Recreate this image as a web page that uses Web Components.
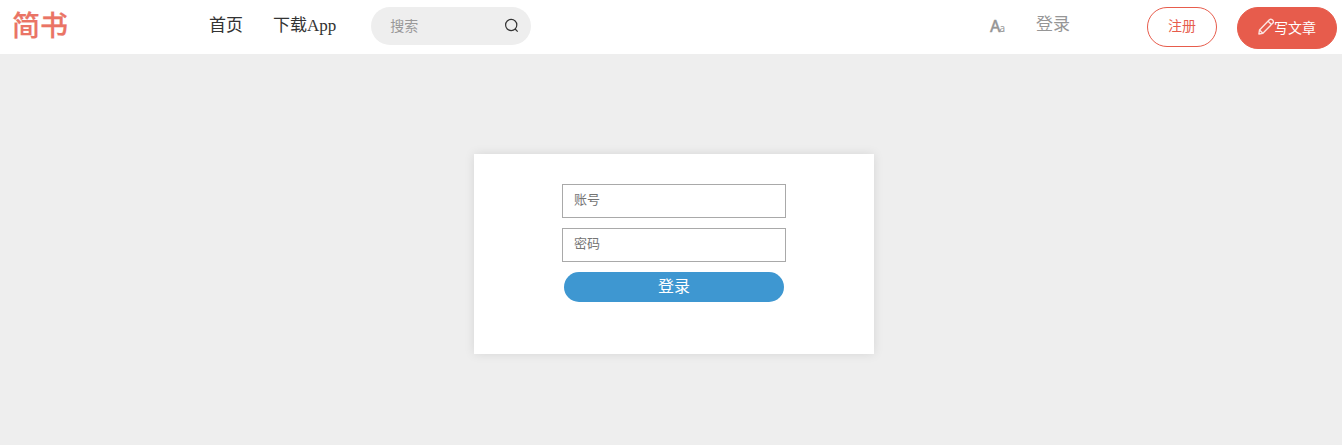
<!DOCTYPE html>
<html lang="zh-CN">
<head>
<meta charset="utf-8">
<title>简书</title>
<style>
html,body{height:100%}
body{margin:0;background:#eee;overflow:hidden;font-family:"Liberation Serif","Noto Sans CJK SC",serif;font-weight:400}
</style>
</head>
<body>
<js-page></js-page>
<script>
function define(name, html){
  const t=document.createElement('template');
  t.innerHTML=html;
  customElements.define(name,class extends HTMLElement{
    constructor(){
      super();
      this.attachShadow({mode:'open'}).appendChild(t.content.cloneNode(true));
    }
  });
}
define('js-logo',`<style>
:host{display:block;width:56px;height:54px;font:500 28px/49px "Noto Sans CJK SC",sans-serif;color:#ea7465;-webkit-text-stroke:.25px #ea7465;white-space:nowrap}
</style><slot></slot>`);
define('js-link',`<style>
:host{display:block;font-size:17px;line-height:20px;height:20px;color:#333;white-space:nowrap}
</style><slot></slot>`);
define('js-search',`<style>
:host{display:flex;box-sizing:border-box;width:160px;height:38px;border-radius:19px;background:#eee;padding:0 12px 0 19px;align-items:center;justify-content:space-between;font-size:14px;line-height:20px;color:#999}
span{margin-top:2px}
svg{display:block;margin-top:-2px}
</style><span><slot></slot></span>
<svg width="15" height="15" viewBox="0 0 15 15" fill="none" stroke="#333" stroke-width="1.2"><circle cx="7.2" cy="7" r="5.6"/><path d="M11.1 11l2.6 2.7"/></svg>`);
define('js-pill',`<style>
:host{display:flex;box-sizing:border-box;height:40px;border:1px solid #e75c4c;border-radius:20px;align-items:center;justify-content:center;font-size:14px;line-height:20px;color:#e75c4c;width:70px}
:host([solid]){width:100px;height:42px;border-radius:21px;background:#e75c4c;color:#fff}
:host([solid]) span{margin-top:2px}
</style><slot name="icon"></slot><span><slot></slot></span>`);
define('js-pen',`<style>
:host{display:block;width:16px;height:17px;margin-top:-3px}
svg{display:block}
</style><svg width="16" height="17" viewBox="0 0 16 17" fill="none" stroke="#fbe4e1" stroke-width="1.4" stroke-linejoin="round"><path d="M.9 16L1.5 12L11.4 1.7Q12.8.6 14.2 1.8L15 2.6Q16 3.9 14.9 5.1L4.9 15.3Z"/><path d="M1.5 12L4.9 15.3M10.1 3.2L13.5 6.5"/></svg>`);
define('js-font-mode',`<style>
:host{display:flex;align-items:baseline;color:#969696;font-family:"Noto Sans",sans-serif;line-height:20px;height:20px;width:16px}
b{font-weight:500;font-size:16px;width:9.5px;-webkit-text-stroke:.3px #969696}
small{font-size:10px}
</style><b>A</b><small>a</small>`);
define('js-header',`<style>
:host{display:flex;box-sizing:border-box;height:54px;background:#fff;padding:0 5px 0 12px;align-items:flex-start}
nav{display:flex;gap:30px;margin:16px 0 0 141px}
js-search{margin:7px 0 0 35px}
.tools{display:flex;margin-left:auto}
js-font-mode{margin:16px 30px 0 0}
.login{margin:15px 77px 0 0;color:#969696}
js-pill{margin-top:7px}
js-pill[solid]{margin-left:20px}
</style>
<js-logo>简书</js-logo>
<nav><js-link>首页</js-link><js-link>下载App</js-link></nav>
<js-search>搜索</js-search>
<div class="tools"><js-font-mode></js-font-mode><js-link class="login">登录</js-link><js-pill>注册</js-pill><js-pill solid><js-pen slot="icon"></js-pen>写文章</js-pill></div>`);
define('js-field',`<style>
:host{display:block;box-sizing:border-box;width:224px;height:34px;border:1px solid #a9a9a9;background:#fff;padding-left:11px;font-size:13px;line-height:30px;color:#757575}
</style><slot></slot>`);
define('js-submit',`<style>
:host{display:block;width:220px;height:30px;border-radius:15px;background:#3e97d1;color:#fff;font-size:16px;line-height:30px;text-align:center}
</style><slot></slot>`);
define('js-card',`<style>
:host{display:flex;flex-direction:column;align-items:center;gap:10px;box-sizing:border-box;width:400px;height:200px;padding-top:30px;background:#fff;box-shadow:0 0 10px rgba(0,0,0,.1)}
</style><slot></slot>`);
define('js-page',`<style>
:host{display:block}
js-card{margin:100px 0 0 474px}
</style><js-header></js-header>
<js-card><js-field>账号</js-field><js-field>密码</js-field><js-submit>登录</js-submit></js-card>`);
</script>
</body>
</html>
